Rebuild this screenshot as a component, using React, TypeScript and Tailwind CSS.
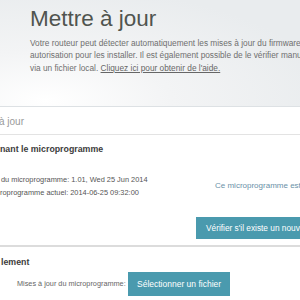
export default function App() {
  return (
    <div className="w-[300px] h-[300px] overflow-hidden bg-white font-['Liberation_Sans',Arial,sans-serif]">
      {/* en-tête */}
      <div className="h-[107px] border-b border-[#dde1e4] pl-[30px] pt-[8px] bg-[radial-gradient(ellipse_at_15%_95%,#ffffff_0%,#f3f4f5_35%,#e9ecee_80%)]">
        <h1 className="text-[22.5px] leading-[22px] text-[#50544f] whitespace-nowrap">Mettre à jour</h1>
        <p className="mt-[7px] w-[290px] text-[8.3px] leading-[12.3px] text-[#6f6f6f] whitespace-nowrap">
          Votre routeur peut détecter automatiquement les mises à jour du firmware<br />
          autorisation pour les installer. Il est également possible de le vérifier manuellement<br />
          via un fichier local. <a className="underline text-[#666]">Cliquez ici pour obtenir de l'aide.</a>
        </p>
      </div>

      {/* panneau */}
      <div className="flex flex-col">
        <div className="h-[28px] flex items-center border-b border-[#e3e3e3] -ml-[1px] pt-[1px] text-[10px] text-[#9a9a9a] whitespace-nowrap">
          à jour
        </div>

        <div className="pt-[8px] text-[8.8px] font-bold text-[#3c3c3c] whitespace-nowrap leading-[12px]">
          nant le microprogramme
        </div>

        <div className="mt-[18px] flex items-center whitespace-nowrap">
          <div className="w-[215px] shrink-0 text-[7.4px] leading-[13px] text-[#555]">
            <div className="pl-[1px]">du microprogramme: 1.01, Wed 25 Jun 2014</div>
            <div>roprogramme actuel: 2014-06-25 09:32:00</div>
          </div>
          <div className="shrink-0 text-[8px] text-[#6a91a8]">Ce microprogramme est à jour.</div>
        </div>

        <div className="mt-[15px] pl-[196px] whitespace-nowrap">
          <button className="h-[22px] pl-[10px] pr-[10px] bg-[#4a9aae] text-white text-[8.3px]">
            Vérifier s'il existe un nouveau microprogramme
          </button>
        </div>

        <div className="mt-[6px] h-[2px] bg-[#dcdcdc]" />

        <div className="pt-[9px] pl-[1px] text-[8.8px] font-bold text-[#3c3c3c] leading-[12px]">lement</div>

        <div className="mt-[4px] flex items-center whitespace-nowrap">
          <span className="pl-[17px] w-[128px] shrink-0 text-[7.3px] text-[#666]">Mises à jour du microprogramme:</span>
          <button className="h-[24px] px-[9px] bg-[#4a9aae] text-white text-[8.5px]">Sélectionner un fichier</button>
        </div>
      </div>
    </div>
  )
}
